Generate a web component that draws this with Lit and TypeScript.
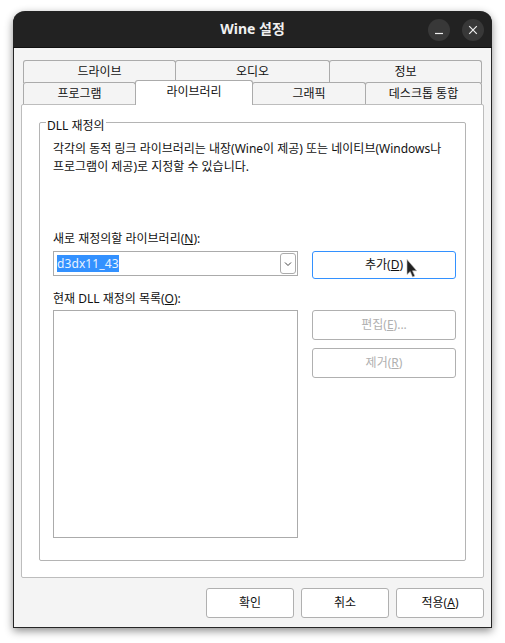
import { LitElement, html, css } from "lit";
import { customElement } from "lit/decorators.js";

@customElement("app-root")
export class AppRoot extends LitElement {
  static styles = css`
    :host { display: block; width: 505px; height: 643px; background: #fff; overflow: hidden; position: relative;
      font-family: "Noto Sans", "Noto Sans CJK KR", sans-serif; font-size: 12px; color: #111; line-height: 16px; }
    .page { padding: 11px 13px 0; box-sizing: border-box; height: 643px; }
    .window { width: 479px; height: 617px; box-sizing: border-box; background: #f4f4f4; border: 1px solid #262626; border-top: 0;
      border-radius: 12px 12px 0 0; box-shadow: 0 3px 9px rgba(0,0,0,.45); display: flex; flex-direction: column; }
    .title { height: 37px; flex: none; background: #222; border-radius: 12px 12px 0 0; display: grid; grid-template-columns: 1fr auto; align-items: center; position: relative; border-bottom: 1px solid #111; box-sizing: border-box; margin: 0 -1px; }
    .title-text { text-align: center; color: #f0f0f0; font-weight: 700; font-size: 14px; position: absolute; left: 0; right: 0; top: 10px; }
    .controls { grid-column: 2; display: flex; gap: 12px; padding-right: 8px; padding-top: 1px; }
    .ctl { width: 22px; height: 22px; border-radius: 50%; background: #383838; display: flex; align-items: center; justify-content: center; }
    .body { flex: 1; display: flex; flex-direction: column; padding: 12px 7px 9px; min-height: 0; }
    .tabs { display: flex; flex-direction: column; padding: 0 2px; height: 44px; flex: none; }
    .row { display: flex; height: 22px; flex: none; }
    .tab { box-sizing: border-box; border: 1px solid #ababab; border-bottom: 0; border-radius: 3px 3px 0 0; background: #f4f4f4;
      display: flex; align-items: center; justify-content: center; height: 23px; margin-right: -1px; }
    .row.front .tab { padding-bottom: 1px; }
    .row.front .tab.sel { background: #fff; height: 25px; margin-top: -2px; position: relative; z-index: 2; padding-bottom: 2px; }
    .t153 { width: 153px; } .t155 { width: 155px; } .t113 { width: 113px; } .t118 { width: 118px; } .t114 { width: 114px; } .t117 { width: 117px; }
    .panel { flex: 1; box-sizing: border-box; background: #fff; border: 1px solid #bdbdbd; border-radius: 2px; padding: 17px 17px 16px; display: flex; min-height: 0; }
    .group { flex: 1; box-sizing: border-box; border: 1px solid #b4b4b4; border-radius: 2px; position: relative; padding: 17px 9px 21px 13px; display: flex; flex-direction: column; }
    .group > * { flex: none; }
    .legend { position: absolute; left: 6px; top: -5px; background: #fff; padding: 0 1px; }
    .desc { margin: 0; line-height: 18px; width: 395px; height: 54px; white-space: nowrap; }
    .lab { height: 16px; margin-top: 37px; }
    .lab2 { height: 16px; margin-top: 12px; }
    .cols { display: grid; grid-template-columns: 245px 144px; column-gap: 14px; }
    .cols.add { margin-top: 4px; height: 28px; }
    .cols.cur { margin-top: 3px; }
    .combo { box-sizing: border-box; width: 245px; height: 25px; border: 1px solid #ababab; display: flex; align-items: center; justify-content: space-between; padding: 0 1px 0 3px; }
    .sel-text { background: #3391ff; color: #eaf3ff; font-size: 12px; line-height: 17px; letter-spacing: .1px; }
    .arrow { width: 16px; height: 21px; box-sizing: border-box; border: 1px solid #ababab; border-radius: 3px; display: flex; align-items: center; justify-content: center; background: #fff; }
    .btn { box-sizing: border-box; border: 1px solid #b0b0b0; border-radius: 3px; background: #fff; display: flex; align-items: center; justify-content: center; height: 30px; width: 144px; }
    .btn.focus { border-color: #3391ff; height: 28px; }
    .btn.dis { color: #b0b0b0; }
    .list { box-sizing: border-box; width: 245px; height: 228px; border: 1px solid #ababab; }
    .side { display: flex; flex-direction: column; gap: 8px; }
    u { text-underline-offset: 1px; }
    .foot { display: flex; justify-content: flex-end; gap: 7px; margin-top: 10px; flex: none; }
    .foot .btn { width: 88px; }
    .cursor { position: absolute; left: 406px; top: 259px; }
  `;

  render() {
    return html`<div class="page"><div class="window">
      <div class="title">
        <div class="title-text">Wine 설정</div>
        <div class="controls">
          <div class="ctl"><svg width="10" height="10" viewBox="0 0 10 10"><path d="M1 8.5h8" stroke="#eee" stroke-width="1.2"/></svg></div>
          <div class="ctl"><svg width="10" height="10" viewBox="0 0 10 10"><path d="M1.2 1.2l7.6 7.6M8.8 1.2l-7.6 7.6" stroke="#eee" stroke-width="1.2"/></svg></div>
        </div>
      </div>
      <div class="body">
        <div class="tabs">
          <div class="row">
            <div class="tab t153">드라이브</div>
            <div class="tab t155">오디오</div>
            <div class="tab t153">정보</div>
          </div>
          <div class="row front">
            <div class="tab t113">프로그램</div>
            <div class="tab sel t118">라이브러리</div>
            <div class="tab t114">그래픽</div>
            <div class="tab t117">데스크톱 통합</div>
          </div>
        </div>
        <div class="panel">
          <div class="group">
            <div class="legend">DLL 재정의</div>
            <p class="desc">각각의 동적 링크 라이브러리는 내장(Wine이 제공) 또는 네이티브(Windows나<br>프로그램이 제공)로 지정할 수 있습니다.</p>
            <div class="lab">새로 재정의할 라이브러리(<u>N</u>):</div>
            <div class="cols add">
              <div class="combo"><span class="sel-text">d3dx11_43</span>
                <span class="arrow"><svg width="8" height="6" viewBox="0 0 8 6"><path d="M1 1.5l3 3 3-3" fill="none" stroke="#444" stroke-width="1"/></svg></span></div>
              <div class="btn focus"><span>추가(<u>D</u>)</span></div>
            </div>
            <div class="lab2">현재 DLL 재정의 목록(<u>O</u>):</div>
            <div class="cols cur">
              <div class="list"></div>
              <div class="side">
                <div class="btn dis"><span>편집(<u>E</u>)...</span></div>
                <div class="btn dis"><span>제거(<u>R</u>)</span></div>
              </div>
            </div>
          </div>
        </div>
        <div class="foot">
          <div class="btn">확인</div>
          <div class="btn">취소</div>
          <div class="btn"><span>적용(<u>A</u>)</span></div>
        </div>
      </div>
    </div></div>
    <svg class="cursor" width="12" height="20" viewBox="0 0 12 20"><path d="M1 .5v15l3.2-3 2.4 5.5 2.2-1-2.3-5.2h4.2z" fill="#222" stroke="#bbb" stroke-width=".6"/></svg>`;
  }
}
